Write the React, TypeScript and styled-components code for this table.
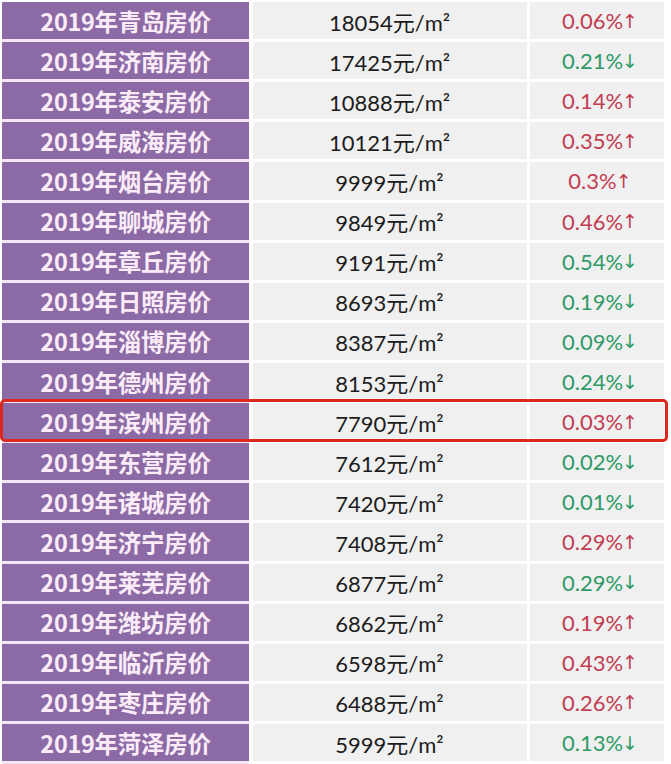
import React from "react";
import styled, { createGlobalStyle } from "styled-components";

interface PriceRow {
  city: string;
  price: number;
  change: string;
  up: boolean;
}

const rows: PriceRow[] = [
  { city: "青岛", price: 18054, change: "0.06%", up: true },
  { city: "济南", price: 17425, change: "0.21%", up: false },
  { city: "泰安", price: 10888, change: "0.14%", up: true },
  { city: "威海", price: 10121, change: "0.35%", up: true },
  { city: "烟台", price: 9999, change: "0.3%", up: true },
  { city: "聊城", price: 9849, change: "0.46%", up: true },
  { city: "章丘", price: 9191, change: "0.54%", up: false },
  { city: "日照", price: 8693, change: "0.19%", up: false },
  { city: "淄博", price: 8387, change: "0.09%", up: false },
  { city: "德州", price: 8153, change: "0.24%", up: false },
  { city: "滨州", price: 7790, change: "0.03%", up: true },
  { city: "东营", price: 7612, change: "0.02%", up: false },
  { city: "诸城", price: 7420, change: "0.01%", up: false },
  { city: "济宁", price: 7408, change: "0.29%", up: true },
  { city: "莱芜", price: 6877, change: "0.29%", up: false },
  { city: "潍坊", price: 6862, change: "0.19%", up: true },
  { city: "临沂", price: 6598, change: "0.43%", up: true },
  { city: "枣庄", price: 6488, change: "0.26%", up: true },
  { city: "菏泽", price: 5999, change: "0.13%", up: false },
];

const GlobalStyle = createGlobalStyle`
  html, body {
    margin: 0;
    padding: 0;
    background: #fff;
  }
`;

const Table = styled.div`
  width: 671px;
  height: 764px;
  box-sizing: border-box;
  padding: 2px 7px 0 2px;
  display: flex;
  flex-direction: column;
  font-family: Lato, "Noto Sans CJK SC", sans-serif;
`;

const Row = styled.div<{ $highlight?: boolean }>`
  position: relative;
  height: 40.2px;
  display: grid;
  grid-template-columns: 247px 274px 134px;
  column-gap: 3.5px;
  ${(p) =>
    p.$highlight &&
    `
    &::after {
      content: "";
      position: absolute;
      left: -2px;
      right: -4px;
      top: -4px;
      bottom: 1px;
      border: 3px solid #d8281f;
      border-radius: 5px;
      pointer-events: none;
    }
  `}
`;

const Cell = styled.div`
  box-sizing: border-box;
  border-bottom: 3.2px solid #fff;
  background: #f0f0f0;
  background-clip: padding-box;
  display: flex;
  align-items: center;
  justify-content: center;
  font-size: 22px;
  color: #1c1c1c;
`;

const CityCell = styled(Cell)`
  background: #8c6aa6;
  background-clip: padding-box;
  border-bottom-color: #f4e6f4;
  color: #fbecf8;
  font-weight: 700;
  font-size: 23.5px;
  font-family: "Noto Sans CJK SC", sans-serif;
  letter-spacing: -0.3px;
`;

const Change = styled(Cell)<{ $up: boolean }>`
  color: ${(p) => (p.$up ? "#c23d52" : "#2f9a68")};
  padding-left: 6px;
`;

const Arrow = styled.span`
  font-family: "DejaVu Sans", sans-serif;
  font-size: 19px;
  margin-left: -1px;
`;

const App = () => {
  return (
    <>
      <GlobalStyle />
      <Table>
        {rows.map((r) => (
          <Row key={r.city} $highlight={r.city === "滨州"}>
            <CityCell>2019年{r.city}房价</CityCell>
            <Cell>{r.price}元/m²</Cell>
            <Change $up={r.up}>
              {r.change}
              <Arrow>{r.up ? "↑" : "↓"}</Arrow>
            </Change>
          </Row>
        ))}
      </Table>
    </>
  );
};

export default App;
